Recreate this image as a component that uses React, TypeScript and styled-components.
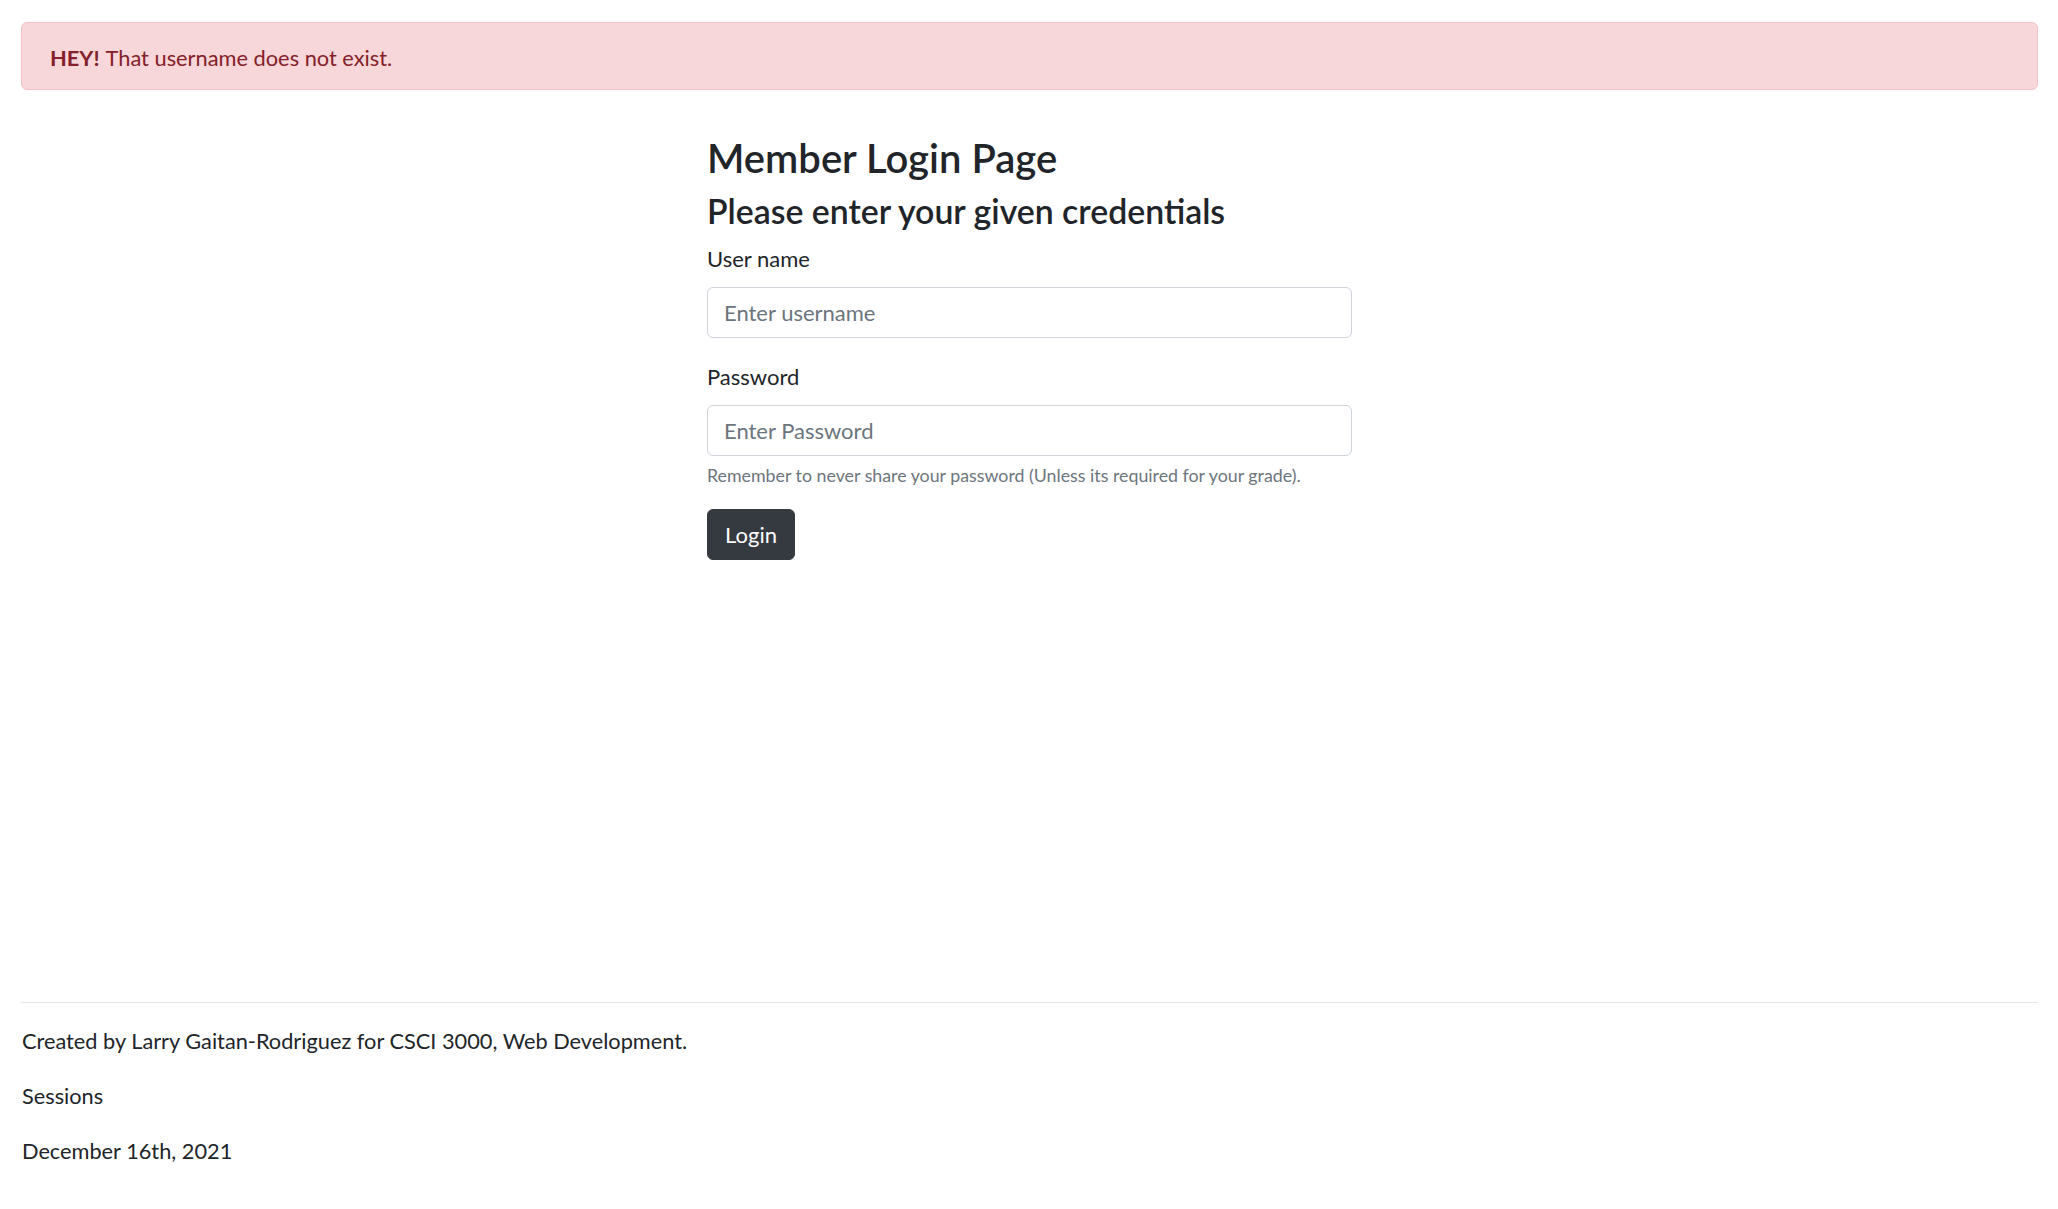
import React from "react";
import styled, { createGlobalStyle } from "styled-components";

const Global = createGlobalStyle`
  html, body { margin: 0; padding: 0; background: #ffffff; }
  body {
    font-family: Lato, "Noto Sans", "Liberation Sans", sans-serif;
    color: #212529;
    -webkit-font-smoothing: antialiased;
  }
  * { box-sizing: border-box; }
`;

const Page = styled.div`
  min-height: 100vh;
  display: flex;
  flex-direction: column;
  padding: 22px 20px 0 21px;
`;

const Alert = styled.div`
  height: 68px;
  display: flex;
  align-items: center;
  padding: 5px 28px 0;
  background: #f8d7da;
  border: 1px solid #f5c2c7;
  border-radius: 6px;
  color: #842029;
  font-size: 21.8px;
  line-height: 1.5;
`;

const Strong = styled.strong`
  font-weight: 700;
  margin-right: 6px;
`;

const Main = styled.main`
  width: 645px;
  margin: 44px auto 0;
  display: flex;
  flex-direction: column;
`;

const Title = styled.h1`
  margin: 0;
  font-size: 40px;
  line-height: 48px;
  font-weight: 600;
`;

const Subtitle = styled.h2`
  margin: 8px 0 0;
  font-size: 33.8px;
  line-height: 42px;
  font-weight: 600;
`;

const Field = styled.div<{ $top: number }>`
  display: flex;
  flex-direction: column;
  margin-top: ${(p) => p.$top}px;
`;

const Label = styled.label`
  font-size: 22px;
  line-height: 32px;
  margin-bottom: 12px;
`;

const Input = styled.input`
  height: 51px;
  width: 100%;
  padding: 0 16px;
  border: 1px solid #ced4da;
  border-radius: 6px;
  font-family: inherit;
  font-size: 22px;
  color: #212529;
  background: #fff;
  outline: none;
  &::placeholder { color: #6c757d; }
`;

const Help = styled.small`
  display: block;
  margin-top: 6px;
  font-size: 17.8px;
  line-height: 26px;
  color: #6c757d;
`;

const Button = styled.button`
  align-self: flex-start;
  margin-top: 21px;
  height: 51px;
  width: 88px;
  padding: 0;
  border: 1px solid #343a40;
  border-radius: 6px;
  background: #343a40;
  color: #ffffff;
  font-family: inherit;
  font-size: 22px;
  cursor: pointer;
`;

const Footer = styled.footer`
  margin-top: auto;
  display: flex;
  flex-direction: column;
  padding-bottom: 19px;
`;

const Rule = styled.hr`
  width: 100%;
  margin: 0 0 22px;
  border: 0;
  border-top: 1px solid #e6e7e8;
`;

const FootLine = styled.p`
  margin: 0 0 22px;
  font-size: 21.75px;
  line-height: 33px;
  padding-left: 1px;
`;

export default function App() {
  return (
    <>
      <Global />
      <Page>
        <Alert>
          <Strong>HEY!</Strong>That username does not exist.
        </Alert>
        <Main>
          <Title>Member Login Page</Title>
          <Subtitle>Please enter your given credentials</Subtitle>
          <Field $top={11}>
            <Label htmlFor="username">User name</Label>
            <Input id="username" type="text" placeholder="Enter username" />
          </Field>
          <Field $top={23}>
            <Label htmlFor="password">Password</Label>
            <Input id="password" type="password" placeholder="Enter Password" />
            <Help>Remember to never share your password (Unless its required for your grade).</Help>
          </Field>
          <Button type="button">Login</Button>
        </Main>
        <Footer>
          <Rule />
          <FootLine>Created by Larry Gaitan-Rodriguez for CSCI 3000, Web Development.</FootLine>
          <FootLine>Sessions</FootLine>
          <FootLine>December 16th, 2021</FootLine>
        </Footer>
      </Page>
    </>
  );
}
